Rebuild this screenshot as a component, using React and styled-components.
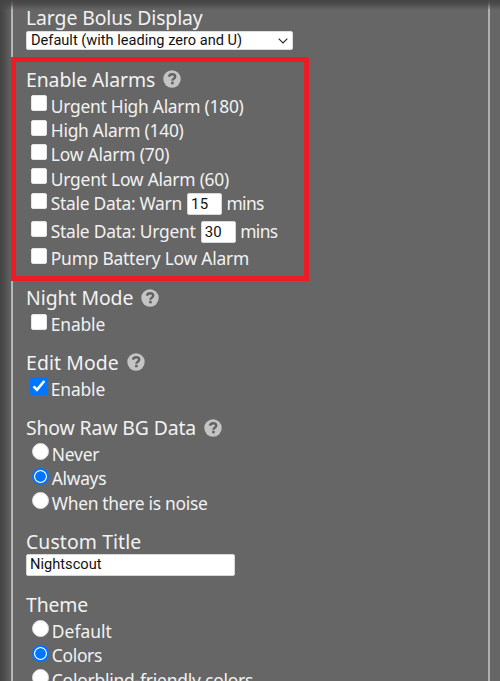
import React from 'react';
import styled, { createGlobalStyle } from 'styled-components';

const Global = createGlobalStyle`
  * { box-sizing: border-box; }
  body { margin: 0; background: #666; overflow: hidden; }
`;

const Page = styled.div`
  position: relative;
  height: 681px;
  overflow: hidden;
  padding: 0 10px 0 11px;
  background: #666;
  color: #f2f2f2;
  font-family: 'Noto Sans', 'Open Sans', sans-serif;
`;

const EdgeShade = styled.div`
  position: absolute;
  inset: 0;
  pointer-events: none;
  background:
    linear-gradient(to right, #444 0, rgba(68, 68, 68, 0.75) 4px, rgba(68, 68, 68, 0) 12px),
    linear-gradient(to bottom, #444 0, rgba(68, 68, 68, 0.75) 4px, rgba(68, 68, 68, 0) 10px);
`;

const Panel = styled.form`
  height: 681px;
  padding: 5px 0 0 13px;
  border-left: 2px solid #b8b8b8;
  border-right: 2px solid #b0b0b0;
`;

const Section = styled.section`
  height: ${(p) => p.$height}px;
`;

const Heading = styled.h3`
  display: flex;
  align-items: flex-start;
  gap: 8px;
  height: 24px;
  margin: 0 0 2px;
  font-size: 19.4px;
  font-weight: 400;
  line-height: 26px;
  letter-spacing: ${(p) => p.$tracking || 0}px;
  white-space: nowrap;
`;

const HelpIcon = styled.svg`
  width: 18px;
  height: 18px;
  margin-top: 3.6px;
  flex: none;
`;

const Row = styled.label`
  display: flex;
  align-items: flex-start;
  height: ${(p) => p.$height || 24.4}px;
  padding-left: 5px;
  font-size: 17.4px;
  line-height: 26px;
  white-space: nowrap;
`;

const Caption = styled.span`
  letter-spacing: ${(p) => p.$tracking || 0}px;
`;

const Check = styled.span`
  flex: none;
  width: 16px;
  height: 16px;
  margin: 2.8px 3.8px 0 0;
  border-radius: 2px;
  background: #fff;
  border: 1px solid #e6e6e6;
`;

const CheckedBox = styled.svg`
  flex: none;
  width: 18px;
  height: 18px;
  margin: 1.5px 2.8px 0 -1px;
`;

const Radio = styled.span`
  flex: none;
  width: 17px;
  height: 17px;
  margin: 2.2px 2.8px 0 1px;
  border-radius: 50%;
  border: ${(p) => (p.$on ? '2px solid #0075ff' : '0.5px solid #ddd')};
  background: ${(p) => (p.$on ? 'radial-gradient(circle, #0075ff 4.9px, #fff 5.6px)' : '#fff')};
`;

const Field = styled.input`
  flex: none;
  height: 22px;
  border: 1px solid #d8d8d8;
  border-radius: 2px;
  background: #fff;
  color: #111;
  font: 14.65px Roboto, 'Liberation Sans', sans-serif;
  outline: 0;
`;

const MinutesField = styled(Field)`
  width: 35px;
  margin: 3px 4.5px 0 5px;
  padding: 0 0 0 3px;
  font-size: 15px;
  letter-spacing: 0.3px;
`;

const TitleField = styled(Field)`
  display: block;
  width: 209px;
  margin-top: -1px;
  padding: 0 0 1px 3px;
`;

const Select = styled.div`
  display: flex;
  align-items: center;
  justify-content: space-between;
  width: 267px;
  height: 19px;
  padding: 0 4px 0 4px;
  border: 1px solid #ddd;
  border-radius: 2px;
  background: #fff;
  color: #111;
  font: 14.6px/17px Roboto, 'Liberation Sans', sans-serif;
`;

const Highlight = styled.div`
  position: absolute;
  left: 11px;
  top: 57px;
  width: 298px;
  height: 224px;
  border: 5px solid #ed1c24;
  pointer-events: none;
`;

function Help() {
  return (
    <HelpIcon viewBox="0 0 18 18">
      <circle cx="9" cy="9" r="8.7" fill="#c4c4c4" />
      <path d="M5.8 6.7C6.3 5 7.5 4.2 9.1 4.2c1.8 0 3.1 1 3.1 2.5 0 2.1-2.8 2.1-2.8 4" fill="none" stroke="#626262" strokeWidth="2.4" />
      <rect x="8.1" y="11.8" width="2.6" height="2.5" fill="#626262" />
    </HelpIcon>
  );
}

function Title({ children, tracking, help }) {
  return (
    <Heading $tracking={tracking}>
      <span>{children}</span>
      {help && <Help />}
    </Heading>
  );
}

function CheckRow({ label, tracking, checked, height, minutes }) {
  return (
    <Row $height={height}>
      {checked ? (
        <CheckedBox viewBox="0 0 18 18">
          <rect width="18" height="18" rx="2.5" fill="#0075ff" />
          <path d="M3.5 9.4 7 12.8 14.3 4" fill="none" stroke="#fff" strokeWidth="2.6" />
        </CheckedBox>
      ) : (
        <Check />
      )}
      <Caption $tracking={tracking}>{label}</Caption>
      {minutes && (
        <>
          <MinutesField defaultValue={minutes} />
          <Caption $tracking={-0.6}>mins</Caption>
        </>
      )}
    </Row>
  );
}

function RadioRow({ label, tracking, on }) {
  return (
    <Row>
      <Radio $on={on} />
      <Caption $tracking={tracking}>{label}</Caption>
    </Row>
  );
}

export default function App() {
  return (
    <Page>
      <Global />
      <EdgeShade />
      <Panel>
        <Section $height={61.5}>
          <Title tracking={-0.1}>Large Bolus Display</Title>
          <Select>
            Default (with leading zero and U)
            <svg width="10" height="6" viewBox="0 0 10 6">
              <path d="M.7.7 5 5 9.3.7" fill="none" stroke="#222" strokeWidth="1.1" />
            </svg>
          </Select>
        </Section>
        <Section $height={218.5}>
          <Title tracking={-0.08} help>Enable Alarms</Title>
          <CheckRow label="Urgent High Alarm (180)" tracking={-0.26} />
          <CheckRow label="High Alarm (140)" tracking={-0.26} />
          <CheckRow label="Low Alarm (70)" tracking={-0.18} />
          <CheckRow label="Urgent Low Alarm (60)" tracking={-0.22} />
          <CheckRow label="Stale Data: Warn" tracking={-0.28} height={28} minutes="15" />
          <CheckRow label="Stale Data: Urgent" tracking={-0.25} height={27} minutes="30" />
          <CheckRow label="Pump Battery Low Alarm" tracking={-0.22} />
        </Section>
        <Section $height={64.5}>
          <Title tracking={-0.05} help>Night Mode</Title>
          <CheckRow label="Enable" tracking={-0.15} />
        </Section>
        <Section $height={65.5}>
          <Title tracking={0.1} help>Edit Mode</Title>
          <CheckRow label="Enable" tracking={-0.15} checked />
        </Section>
        <Section $height={113.5}>
          <Title tracking={-0.13} help>Show Raw BG Data</Title>
          <RadioRow label="Never" tracking={-0.2} />
          <RadioRow label="Always" tracking={-0.3} on />
          <RadioRow label="When there is noise" tracking={-0.29} />
        </Section>
        <Section $height={63.5}>
          <Title tracking={0.1}>Custom Title</Title>
          <TitleField defaultValue="Nightscout" />
        </Section>
        <Section $height={90}>
          <Title tracking={-0.15}>Theme</Title>
          <RadioRow label="Default" tracking={0.05} />
          <RadioRow label="Colors" tracking={-0.3} on />
          <RadioRow label="Colorblind-friendly colors" tracking={-0.2} />
        </Section>
      </Panel>
      <Highlight />
    </Page>
  );
}
